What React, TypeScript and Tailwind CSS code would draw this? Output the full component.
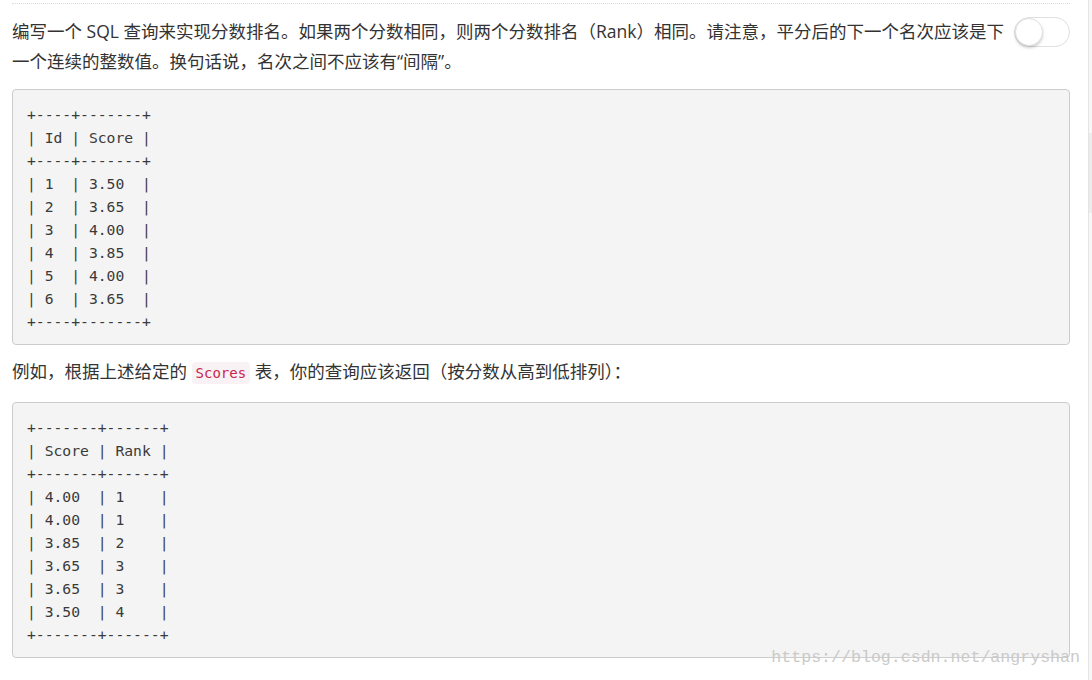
import React from "react";

const table1 = `+----+-------+
| Id | Score |
+----+-------+
| 1  | 3.50  |
| 2  | 3.65  |
| 3  | 4.00  |
| 4  | 3.85  |
| 5  | 4.00  |
| 6  | 3.65  |
+----+-------+`;

const table2 = `+-------+------+
| Score | Rank |
+-------+------+
| 4.00  | 1    |
| 4.00  | 1    |
| 3.85  | 2    |
| 3.65  | 3    |
| 3.65  | 3    |
| 3.50  | 4    |
+-------+------+`;

const textFont = {
  fontFamily: '"Open Sans", "Noto Sans CJK SC", sans-serif',
};
const monoFont = {
  fontFamily: '"DejaVu Sans Mono", "Liberation Mono", monospace',
};

function CodeBlock({ children }: { children: string }) {
  return (
    <pre
      className="m-0 rounded-[4px] border border-[#cccccc] bg-[#f4f4f4] px-[14px] pt-[13px] pb-[11px] text-[14.7px] leading-[23px] text-[#3a3a3a] whitespace-pre"
      style={monoFont}
    >
      {children}
    </pre>
  );
}

export default function App() {
  return (
    <div className="relative flex h-[680px] w-[1092px] overflow-hidden bg-white">
      <div className="w-[1088px] pl-[12px] pr-[18px]">
        <div className="mt-[3px] border-t border-dotted border-[#dcdcdc]" />
        <p
          className="mt-[12px] text-[17.5px] leading-[30px] text-[#333333]"
          style={textFont}
        >
          <span className="float-right ml-[6px] mt-[1px] block h-[30px] w-[56px] rounded-full border border-[#dfdfdf] bg-white relative">
            <span className="absolute left-[0px] top-[0px] block h-[28px] w-[28px] rounded-full bg-white border border-[#e0e0e0] shadow-[0_2px_3px_rgba(0,0,0,0.18)]" />
          </span>
          编写一个 SQL 查询来实现分数排名。如果两个分数相同，则两个分数排名（Rank）相同。请注意，平分后的下一个名次应该是下
          <br />
          一个连续的整数值。换句话说，名次之间不应该有“间隔”。
        </p>
        <div className="mt-[13px]">
          <CodeBlock>{table1}</CodeBlock>
        </div>
        <p
          className="mt-[11px] h-[30px] overflow-visible text-[17.5px] leading-[30px] text-[#333333]"
          style={textFont}
        >
          例如，根据上述给定的{" "}
          <code
            className="rounded-[4px] bg-[#f9f2f4] px-[4px] py-[3px] text-[14px] leading-none text-[#c7254e]"
            style={monoFont}
          >
            Scores
          </code>{" "}
          表，你的查询应该返回（按分数从高到低排列）：
        </p>
        <div className="mt-[16px]">
          <CodeBlock>{table2}</CodeBlock>
        </div>
      </div>
      <div className="h-full w-px bg-[#e4e4e4]" />
      <div className="flex h-full flex-1 flex-col bg-[#f7f7f7]">
        <div className="h-[133px]" />
        <div className="h-[80px] bg-[#ececec]" />
      </div>
      <div
        className="pointer-events-none absolute right-[12px] top-[646px] text-[16.6px] leading-[24px] text-[#cacaca]"
        style={{ fontFamily: '"Liberation Mono", monospace' }}
      >
        https://blog.csdn.net/angryshan
      </div>
    </div>
  );
}
